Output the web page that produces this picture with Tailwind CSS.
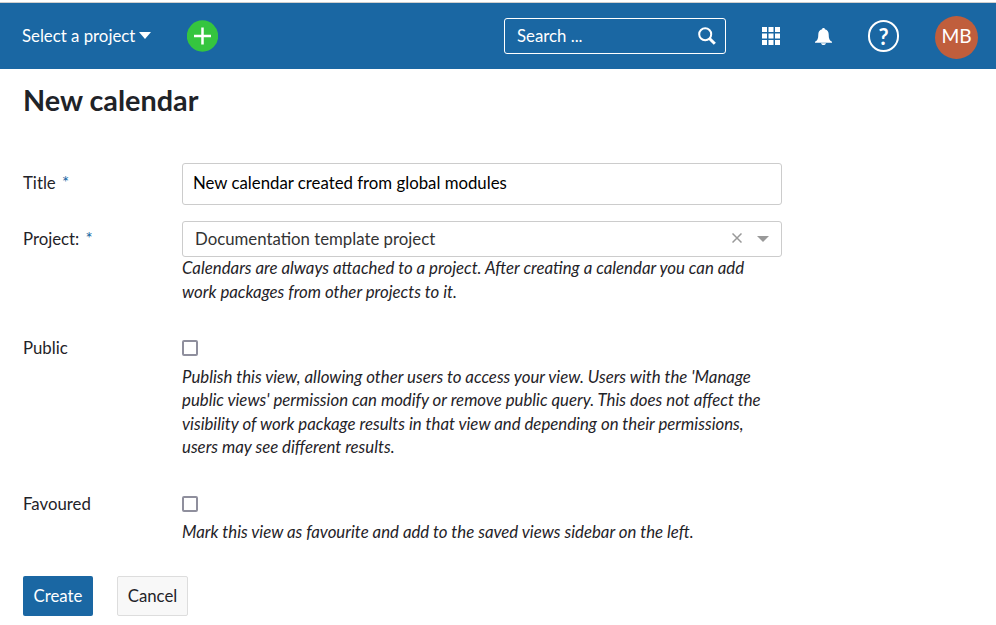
<!DOCTYPE html>
<html lang="en"><head><meta charset="utf-8"><title>New calendar</title>
<script src="https://cdn.jsdelivr.net/npm/@tailwindcss/browser@4"></script></head>
<body class="bg-white font-['Lato',sans-serif] text-[#1f2328] text-[16.8px] w-[996px] h-[625px] overflow-hidden">
<header class="mt-[2px] h-[67px] border-t border-[#d0cfce] bg-[#1a67a3] flex items-center text-white pl-[22px] pr-[18px]">
<button class="flex items-center gap-1 w-[165px]"><span>Select a project</span><svg class="-mt-px" width="12" height="7" viewBox="0 0 12 7"><path d="M0 0h12L6 7z" fill="currentColor"/></svg></button>
<button><svg width="31" height="32" viewBox="0 0 31 32"><circle cx="15.500" cy="16" r="15.700" fill="#35c53f"/><path d="M15.500 7.500v17M7 16h17" stroke="#fff" stroke-width="2.500"/></svg></button>
<div class="ml-auto flex items-center">
<div class="w-[222px] h-[36px] border border-white rounded-[3px] flex items-center justify-between pl-3 pr-[9px]"><span>Search ...</span><svg width="18" height="18" viewBox="0 0 18 18" fill="none" stroke="currentColor"><circle cx="7.200" cy="7.200" r="6" stroke-width="2"/><path d="M11.500 11.500l5.300 5.300" stroke-width="3"/></svg></div>
<svg class="ml-9" width="18" height="18" viewBox="0 0 18 18" fill="currentColor"><path d="M0 0h5v5H0zM6.500 0h5v5h-5zM13 0h5v5h-5zM0 6.500h5v5H0zM6.500 6.500h5v5h-5zM13 6.500h5v5h-5zM0 13h5v5H0zM6.500 13h5v5h-5zM13 13h5v5h-5z"/></svg>
<svg class="ml-[35px] mt-px" width="17" height="17" viewBox="0 0 17 17" fill="currentColor"><path d="M8.500 0c.9 0 1.300.5 1.400 1.200C12.700 1.800 13.700 4 13.700 6.500c0 4 .8 6 3.300 7.300v.9H0v-.9c2.500-1.300 3.300-3.300 3.300-7.300 0-2.500 1-4.700 3.800-5.300C7.200.5 7.600 0 8.500 0zM6 15.200h5c-.3 1.200-1.200 1.800-2.500 1.800S6.300 16.400 6 15.200z"/></svg>
<span class="ml-9 w-[31px] h-8 rounded-full border-2 border-white flex items-center justify-center text-[22px] font-bold">?</span>
<span class="ml-9 mt-[2px] size-[43px] rounded-full bg-[#c05e3c] flex items-center justify-center text-[19.200px] leading-none pb-[2px]">MB</span>
</div></header>
<main class="px-[23px]">
<h1 class="text-[28.8px] leading-[36px] font-bold pt-[13px] h-[94px]">New calendar</h1>
<form class="flex flex-col">
<div class="flex h-[58px]"><label class="w-[159px] leading-[40px]">Title <span class="text-[#1a67a3] ml-[2px]">*</span></label><div class="w-[600px] h-[42px] border border-[#ccc] rounded-[3px] px-[10px] leading-[38px] text-black">New calendar created from global modules</div></div>
<div class="flex h-[109px]"><label class="w-[159px] leading-[36px]">Project: <span class="text-[#1a67a3] ml-[2px]">*</span></label><div class="w-[600px]"><div class="h-[36px] border border-[#ccc] rounded-[3px] px-3 flex items-center text-[#333]"><span>Documentation template project</span><svg class="ml-auto -mt-[2px]" width="10" height="10" viewBox="0 0 10 10" stroke="#999" stroke-width="1.500"><path d="M.5 .5l9 9M9.500 .5l-9 9"/></svg><svg class="ml-[15px]" width="12" height="6" viewBox="0 0 12 6"><path d="M0 0h12L6 6z" fill="#999"/></svg></div><p class="-mt-px italic text-[16.815px] leading-[23.500px] whitespace-nowrap">Calendars are always attached to a project. After creating a calendar you can add<br>work packages from other projects to it.</p></div></div>
<div class="flex h-[156px]"><label class="w-[159px] leading-[36px]">Public</label><div><div class="h-[34.500px] pt-[10px]"><div class="size-4 border-2 border-[#8f8f9d] rounded-[2px]"></div></div><p class="italic text-[16.815px] leading-[23.500px] whitespace-nowrap">Publish this view, allowing other users to access your view. Users with the 'Manage<br>public views' permission can modify or remove public query. This does not affect the<br>visibility of work package results in that view and depending on their permissions,<br>users may see different results.</p></div></div>
<div class="flex h-[90px]"><label class="w-[159px] leading-[36px]">Favoured</label><div><div class="h-[34px] pt-[10px]"><div class="size-4 border-2 border-[#8f8f9d] rounded-[2px]"></div></div><p class="italic text-[16.815px] leading-[23.500px] whitespace-nowrap">Mark this view as favourite and add to the saved views sidebar on the left.</p></div></div>
<div class="flex gap-6"><button type="button" class="w-[70px] h-10 bg-[#1a67a3] text-white rounded-[2px]">Create</button><button type="button" class="w-[71px] h-10 bg-[#f8f8f8] border border-[#ddd] rounded-[2px]">Cancel</button></div>
</form></main></body></html>
